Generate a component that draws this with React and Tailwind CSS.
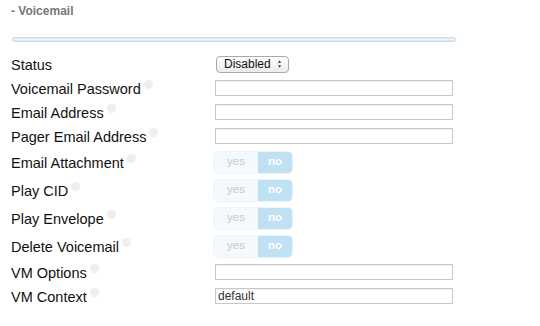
import React from "react";

const sans = { fontFamily: '"Liberation Sans", Arial, sans-serif' };

function Help() {
  return (
    <span className="inline-block w-[9px] h-[9px] rounded-full bg-[#efefef] ml-[3px] -translate-y-[6px] align-middle" />
  );
}

function Label({ text, help = true }) {
  return (
    <div className="w-[204px] shrink-0 text-[14.5px] leading-[16px] text-[#111] translate-y-[1px]">
      {text}
      {help && <Help />}
    </div>
  );
}

function TextInput({ value = "" }) {
  return (
    <div className="w-[238px] h-[16px] border border-[#c9c9c9] bg-white shadow-[inset_0_1px_1px_rgba(0,0,0,0.06)] text-[12px] leading-[14px] text-[#333] px-[2px]">
      {value}
    </div>
  );
}

function Toggle() {
  return (
    <div className="-ml-[2px] flex w-[80px] h-[23px] rounded-[5px] overflow-hidden border border-[#eaf4f9] text-[11.5px]">
      <div className="w-[44px] bg-[#f3f9fc] text-[#c3cbcf] flex items-center justify-center">
        yes
      </div>
      <div className="flex-1 bg-[#bfe1f3] text-white font-bold flex items-center justify-center">
        no
      </div>
    </div>
  );
}

function Row({ label, help, h = "h-[24px]", children }) {
  return (
    <div className={`flex items-center ${h}`}>
      <Label text={label} help={help} />
      {children}
    </div>
  );
}

export default function App() {
  return (
    <div className="w-[540px] h-[326px] bg-white px-[11px] pt-[4px]" style={sans}>
      <h3 className="text-[12px] leading-[14px] font-bold text-[#777]">- Voicemail</h3>
      <div className="mt-[19px] ml-[1px] w-[444px] h-[5px] rounded-full border border-[#c9dbe7] bg-gradient-to-b from-[#d6e5ef] via-[#eef5f9] to-[#d6e5ef]" />

      <div className="mt-[10px] flex flex-col">
        <Row label="Status" help={false}>
          <div className="ml-[1px] w-[73px] h-[17px] rounded-[4px] border border-[#a9a9a9] bg-gradient-to-b from-white to-[#ececec] flex items-center justify-between pl-[7px] pr-[6px] text-[12px] text-[#111]">
            <span>Disabled</span>
            <span className="flex flex-col text-[5px] leading-[5px] text-[#444]">
              <span>▲</span>
              <span>▼</span>
            </span>
          </div>
        </Row>
        <Row label="Voicemail Password">
          <TextInput />
        </Row>
        <Row label="Email Address">
          <TextInput />
        </Row>
        <Row label="Pager Email Address">
          <TextInput />
        </Row>
        <Row label="Email Attachment" h="h-[28px]">
          <Toggle />
        </Row>
        <Row label="Play CID" h="h-[28px]">
          <Toggle />
        </Row>
        <Row label="Play Envelope" h="h-[28px]">
          <Toggle />
        </Row>
        <Row label="Delete Voicemail" h="h-[28px]">
          <Toggle />
        </Row>
        <Row label="VM Options">
          <TextInput />
        </Row>
        <Row label="VM Context">
          <TextInput value="default" />
        </Row>
      </div>
    </div>
  );
}
